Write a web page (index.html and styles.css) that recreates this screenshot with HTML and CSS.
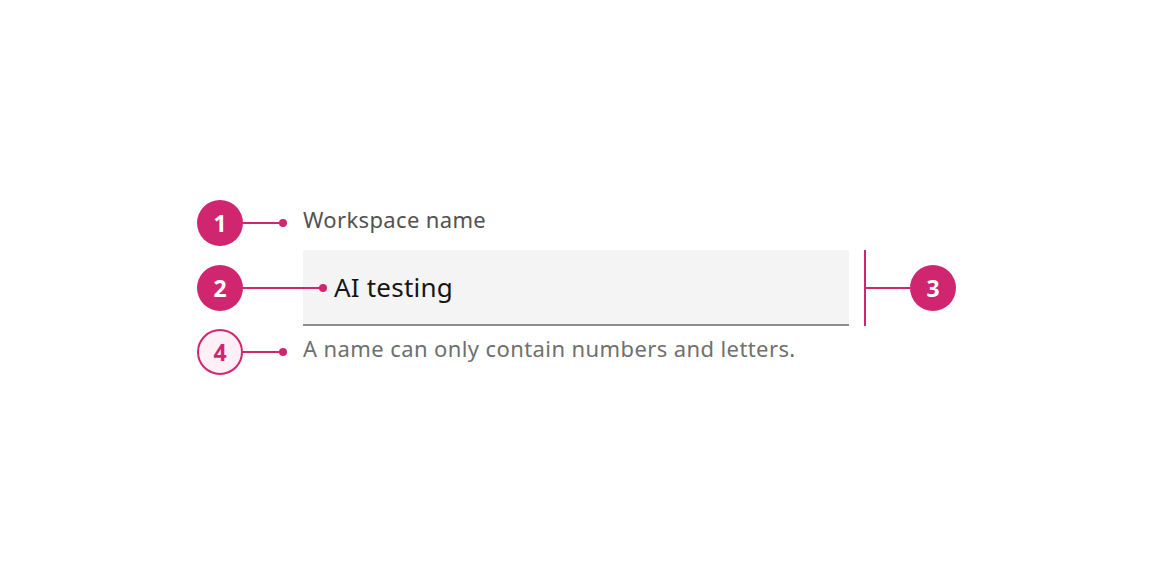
FILE: index.html
```html
<!DOCTYPE html>
<html lang="en">
<head>
<meta charset="utf-8">
<title>Text input anatomy</title>
<link rel="stylesheet" href="styles.css">
</head>
<body>
<main class="canvas">
  <section class="spec">
    <div class="row row-label">
      <span class="callout">1</span>
      <span class="leader leader-short"><span class="line"></span><span class="dot"></span></span>
      <span class="label">Workspace name</span>
    </div>
    <div class="row row-field">
      <span class="callout">2</span>
      <span class="leader leader-long"><span class="line"></span><span class="dot"></span></span>
      <div class="field">AI testing</div>
      <div class="bracket">
        <span class="bar"></span>
        <span class="line"></span>
      </div>
      <span class="callout">3</span>
    </div>
    <div class="row row-helper">
      <span class="callout callout-outline">4</span>
      <span class="leader leader-short"><span class="line"></span><span class="dot"></span></span>
      <span class="helper">A name can only contain numbers and letters.</span>
    </div>
  </section>
</main>
</body>
</html>
```

FILE: styles.css
```css
html, body {
  margin: 0;
  padding: 0;
  background: #ffffff;
}

body {
  font-family: "Noto Sans", "Open Sans", sans-serif;
  width: 1152px;
  height: 576px;
  overflow: hidden;
}

.canvas {
  padding-top: 200px;
  padding-left: 197px;
}

.spec {
  display: flex;
  flex-direction: column;
}

.row {
  display: flex;
  align-items: center;
}

.row-label {
  height: 46px;
  margin-bottom: 4px;
}

.row-field {
  height: 76px;
}

.row-helper {
  height: 46px;
  margin-top: 3px;
}

.callout {
  flex: none;
  width: 46px;
  height: 46px;
  border-radius: 50%;
  background: #d02670;
  color: #ffffff;
  font-weight: 700;
  font-size: 23px;
  display: flex;
  align-items: center;
  justify-content: center;
  box-sizing: border-box;
}

.callout-outline {
  background: #fff0f7;
  border: 2px solid #d02670;
  color: #d02670;
}

.leader {
  flex: none;
  display: flex;
  align-items: center;
  position: relative;
  z-index: 1;
}

.leader .line {
  flex: 1;
  height: 2px;
  background: #d02670;
}

.leader .dot {
  flex: none;
  width: 8px;
  height: 8px;
  border-radius: 50%;
  background: #d02670;
  margin-left: -1px;
}

.leader-short {
  width: 44px;
  margin-right: 16px;
}

.leader-long {
  width: 84px;
  margin-right: -24px;
}

.label {
  font-size: 22px;
  color: #525252;
  letter-spacing: 0.35px;
  margin-bottom: 9px;
}

.helper {
  font-size: 22px;
  color: #6f6f6f;
  letter-spacing: 0.4px;
  margin-bottom: 9px;
}

.field {
  flex: none;
  width: 546px;
  height: 76px;
  box-sizing: border-box;
  background: #f4f4f4;
  border-bottom: 2px solid #8d8d8d;
  padding-left: 31px;
  padding-bottom: 0;
  display: flex;
  align-items: center;
  font-size: 26px;
  letter-spacing: 0.2px;
  color: #161616;
}

.bracket {
  flex: none;
  margin-left: 15px;
  width: 46px;
  height: 76px;
  display: flex;
  align-items: center;
}

.bracket .bar {
  flex: none;
  width: 2px;
  height: 76px;
  background: #d02670;
}

.bracket .line {
  flex: 1;
  height: 2px;
  background: #d02670;
}
```
